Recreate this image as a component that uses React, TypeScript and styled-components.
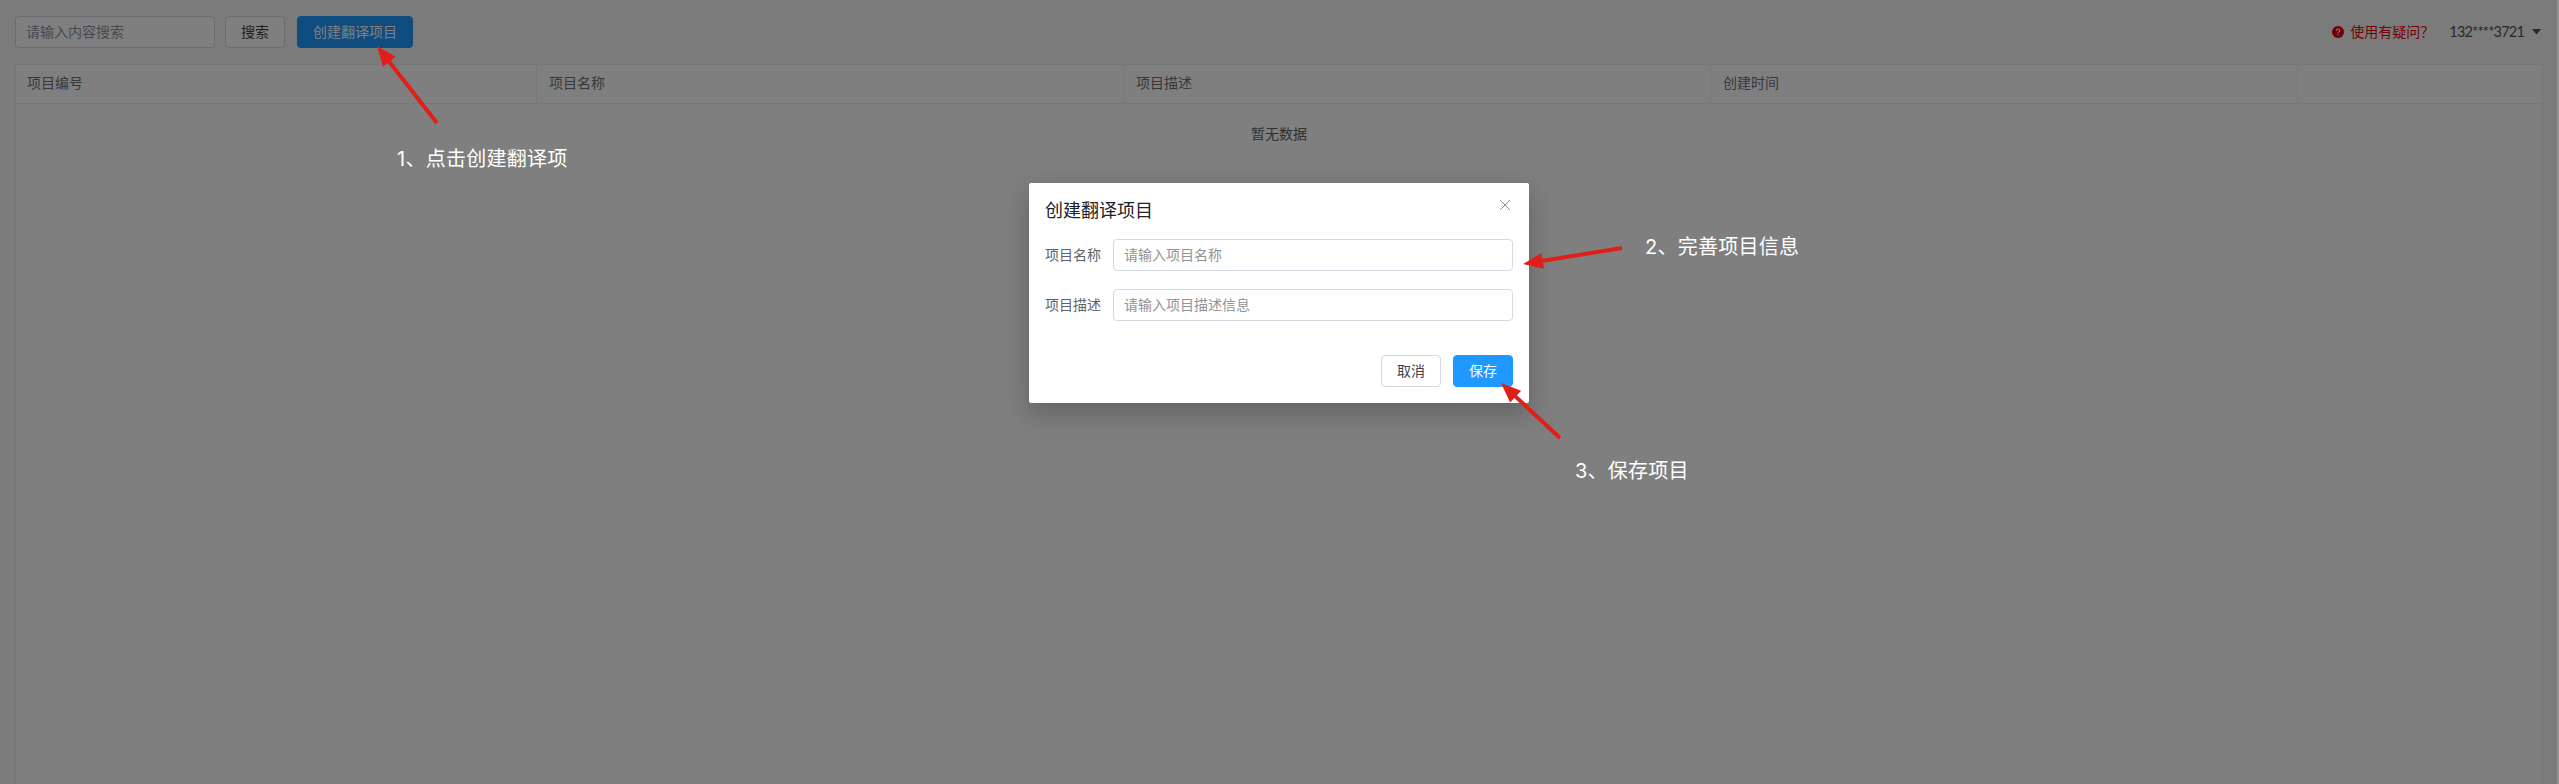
import React from "react";
import styled, { createGlobalStyle } from "styled-components";

const Global = createGlobalStyle`
  * { box-sizing: border-box; }
  html, body { margin: 0; height: 100%; overflow: hidden; }
  body { background: #f7f7f7; color: #606266; font: 14px/1 "Noto Sans CJK SC", sans-serif; }
  button, input { font: inherit; }
`;

const Page = styled.div`
  height: 784px;
  padding: 16px 16px 0 15px;
  display: flex;
  flex-direction: column;
  gap: 16px;
`;

const Toolbar = styled.header`
  display: flex;
  align-items: center;
  height: 32px;
`;

const TextInput = styled.input<{ $width?: number; $pad?: number }>`
  width: ${(p) => (p.$width ? `${p.$width}px` : "100%")};
  height: 32px;
  padding: 0 ${(p) => p.$pad ?? 10}px 2px;
  border: 1px solid #d5d9e4;
  border-radius: 4px;
  background: #fff;
  outline: none;
  &::placeholder { color: #909399; opacity: 1; }
`;

const Button = styled.button<{ $primary?: boolean; $width?: number }>`
  width: ${(p) => p.$width ?? 60}px;
  height: 32px;
  flex: none;
  padding: 0 0 2px;
  border: 1px solid ${(p) => (p.$primary ? "#1f98ff" : "#d5d9e4")};
  border-radius: 4px;
  background: ${(p) => (p.$primary ? "#1f98ff" : "#fff")};
  color: ${(p) => (p.$primary ? "#fff" : "#404246")};
  white-space: nowrap;
`;

const Tools = styled.div`
  display: flex;
  flex: 1;
  ${TextInput} { margin-right: 10px; }
  ${Button} + ${Button} { margin-left: 12px; }
`;

const Help = styled.a`
  display: flex;
  align-items: center;
  gap: 6px;
  color: #e8000f;
  margin-right: 15px;
`;

const HelpText = styled.span`
  padding-bottom: 2px;
`;

const Account = styled.div`
  display: flex;
  align-items: center;
  gap: 8px;
  color: #505255;
  margin-right: 2px;
`;

const Phone = styled.span`
  font: 14.5px/20px Lato, sans-serif;
  letter-spacing: -0.8px;
`;

const Table = styled.section`
  flex: 1;
  background: #fff;
  border: solid #ebeef5;
  border-width: 1px 1px 0;
`;

const HeadRow = styled.div`
  display: grid;
  grid-template-columns: 521px 587px 587px 587px 1fr;
  height: 39px;
  border-bottom: 1px solid #ebeef5;
`;

const HeadCell = styled.div`
  display: flex;
  align-items: center;
  padding: 0 12px 4px;
  color: #6d7076;
  border-right: 1px solid #ebeef5;
  &:first-child { padding-left: 11px; }
  &:last-child { border-right: 0; }
`;

const Empty = styled.div`
  height: 58px;
  display: flex;
  align-items: center;
  justify-content: center;
  color: #606266;
`;

const Overlay = styled.div`
  position: absolute;
  inset: 0 2px 0 0;
  background: rgba(0, 0, 0, 0.5);
`;

const ScrollEdge = styled.div`
  position: absolute;
  inset: 0 0 0 auto;
  width: 2px;
  background: #929292;
`;

const Dialog = styled.form`
  position: absolute;
  left: 1029px;
  top: 183px;
  width: 500px;
  height: 220px;
  padding: 16px;
  background: #fff;
  border-radius: 2px;
  box-shadow: 0 12px 32px 4px rgba(0, 0, 0, 0.1), 0 8px 20px rgba(0, 0, 0, 0.12);
`;

const DialogHead = styled.div`
  display: flex;
  justify-content: space-between;
  height: 40px;
  svg { margin: 0 2px 0 0; }
`;

const Title = styled.h2`
  margin: 0;
  font-size: 18px;
  line-height: 21px;
  font-weight: 400;
  color: #202124;
`;

const Field = styled.label`
  display: flex;
  align-items: center;
  height: 32px;
  margin-bottom: 18px;
`;

const FieldLabel = styled.span`
  width: 68px;
  flex: none;
  padding-bottom: 2px;
`;

const Actions = styled.div`
  display: flex;
  justify-content: flex-end;
  gap: 12px;
  margin-top: 34px;
`;

const Note = styled.p<{ $x: number; $y: number }>`
  position: absolute;
  left: ${(p) => p.$x}px;
  top: ${(p) => p.$y}px;
  margin: 0;
  color: #fff;
  font: 20px/28px Inter, "Noto Sans CJK SC", sans-serif;
  letter-spacing: 0.25px;
  white-space: nowrap;
`;

const Arrows = styled.svg`
  position: absolute;
  inset: 0;
  pointer-events: none;
`;

type ArrowProps = { from: [number, number]; tip: [number, number] };

function Arrow({ from, tip }: ArrowProps) {
  const dx = tip[0] - from[0];
  const dy = tip[1] - from[1];
  const length = Math.hypot(dx, dy);
  const angle = (Math.atan2(dy, dx) * 180) / Math.PI;
  return (
    <g transform={`translate(${from[0]} ${from[1]}) rotate(${angle})`} fill="#e01f18">
      <rect x={0} y={-2} width={length - 17} height={4} />
      <path d={`M${length} 0 L${length - 20} -8 V8 Z`} />
    </g>
  );
}

const columns = ["项目编号", "项目名称", "项目描述", "创建时间", ""];

export default function App() {
  return (
    <>
      <Global />
      <Page>
        <Toolbar>
          <Tools>
            <TextInput $width={200} placeholder="请输入内容搜索" />
            <Button>搜索</Button>
            <Button $primary $width={116}>创建翻译项目</Button>
          </Tools>
          <Help>
            <svg width="12" height="12" viewBox="0 0 12 12">
              <circle cx="6" cy="6" r="6" fill="#e8000f" />
              <path d="M4.4 4.7a1.6 1.6 0 1 1 2.3 1.4Q6 6.4 6 7.1" fill="none" stroke="#f7f7f7" strokeWidth="1.1" />
              <circle cx="6" cy="8.8" r=".7" fill="#f7f7f7" />
            </svg>
            <HelpText>使用有疑问？</HelpText>
          </Help>
          <Account>
            <Phone>132****3721</Phone>
            <svg width="9" height="6" viewBox="0 0 9 6"><path d="M0 0H9L4.5 5.5Z" fill="#505255" /></svg>
          </Account>
        </Toolbar>
        <Table>
          <HeadRow>
            {columns.map((c, i) => <HeadCell key={i}>{c}</HeadCell>)}
          </HeadRow>
          <Empty>暂无数据</Empty>
        </Table>
      </Page>
      <Overlay />
      <ScrollEdge />
      <Dialog>
        <DialogHead>
          <Title>创建翻译项目</Title>
          <svg width="12" height="12" viewBox="0 0 12 12" fill="none" stroke="#85888e" strokeWidth="1">
            <path d="M1.2 1.2 10.8 10.8M10.8 1.2 1.2 10.8" />
          </svg>
        </DialogHead>
        <Field>
          <FieldLabel>项目名称</FieldLabel>
          <TextInput $pad={10} placeholder="请输入项目名称" />
        </Field>
        <Field>
          <FieldLabel>项目描述</FieldLabel>
          <TextInput $pad={10} placeholder="请输入项目描述信息" />
        </Field>
        <Actions>
          <Button type="button">取消</Button>
          <Button type="button" $primary>保存</Button>
        </Actions>
      </Dialog>
      <Arrows width="2559" height="784">
        <Arrow from={[437, 123]} tip={[377, 46]} />
        <Arrow from={[1622, 248]} tip={[1523, 264]} />
        <Arrow from={[1560, 438]} tip={[1501, 383]} />
      </Arrows>
      <Note $x={397} $y={145}>1、点击创建翻译项</Note>
      <Note $x={1645} $y={233}>2、完善项目信息</Note>
      <Note $x={1575} $y={457}>3、保存项目</Note>
    </>
  );
}
